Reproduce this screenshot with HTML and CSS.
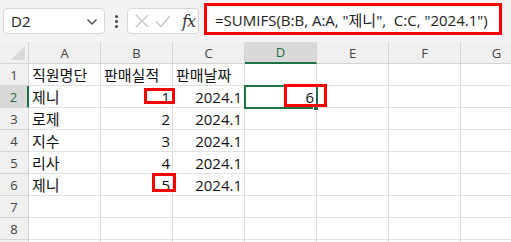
FILE: index.html
```html
<!DOCTYPE html>
<html lang="ko">
<head>
<meta charset="utf-8">
<link rel="stylesheet" href="styles.css">
</head>
<body>
<div class="app">
  <div class="toolbar">
    <div class="namebox">
      <span class="ref">D2</span>
      <svg class="chev" width="12" height="8" viewBox="0 0 12 8"><path d="M1.5 1.5 L6 6 L10.5 1.5" fill="none" stroke="#444" stroke-width="1.3"/></svg>
    </div>
    <div class="kebab"><i></i><i></i><i></i></div>
    <div class="fxbox">
      <svg width="16" height="16" viewBox="0 0 16 16"><path d="M2 2 L14 14 M14 2 L2 14" stroke="#c4c4c4" stroke-width="1.3" fill="none"/></svg>
      <svg width="18" height="16" viewBox="0 0 18 16"><path d="M2 8.5 L7 13.5 L16 3" stroke="#c4c4c4" stroke-width="1.3" fill="none"/></svg>
      <span class="fx">fx</span>
    </div>
    <div class="formula">=SUMIFS(B:B, A:A, "제니",&nbsp; C:C, "2024.1")</div>
  </div>
  <div class="sheet">
    <div class="corner"><span class="tri"></span></div>
    <div class="colh">A</div>
    <div class="colh">B</div>
    <div class="colh">C</div>
    <div class="colh sel">D</div>
    <div class="colh">E</div>
    <div class="colh">F</div>
    <div class="colh">G</div>

    <div class="rowh">1</div>
    <div class="cell">직원명단</div>
    <div class="cell">판매실적</div>
    <div class="cell">판매날짜</div>
    <div class="cell"></div><div class="cell"></div><div class="cell"></div><div class="cell"></div>

    <div class="rowh sel">2</div>
    <div class="cell">제니</div>
    <div class="cell num">1<span class="mark mark-b2"></span></div>
    <div class="cell num">2024.1</div>
    <div class="cell num active">6<span class="handle"></span><span class="mark mark-d2"></span></div>
    <div class="cell"></div><div class="cell"></div><div class="cell"></div>

    <div class="rowh">3</div>
    <div class="cell">로제</div>
    <div class="cell num">2</div>
    <div class="cell num">2024.1</div>
    <div class="cell"></div><div class="cell"></div><div class="cell"></div><div class="cell"></div>

    <div class="rowh">4</div>
    <div class="cell">지수</div>
    <div class="cell num">3</div>
    <div class="cell num">2024.1</div>
    <div class="cell"></div><div class="cell"></div><div class="cell"></div><div class="cell"></div>

    <div class="rowh">5</div>
    <div class="cell">리사</div>
    <div class="cell num">4</div>
    <div class="cell num">2024.1</div>
    <div class="cell"></div><div class="cell"></div><div class="cell"></div><div class="cell"></div>

    <div class="rowh">6</div>
    <div class="cell">제니</div>
    <div class="cell num">5<span class="mark mark-b6"></span></div>
    <div class="cell num">2024.1</div>
    <div class="cell"></div><div class="cell"></div><div class="cell"></div><div class="cell"></div>

    <div class="rowh">7</div>
    <div class="cell"></div><div class="cell"></div><div class="cell"></div><div class="cell"></div><div class="cell"></div><div class="cell"></div><div class="cell"></div>

    <div class="rowh">8</div>
    <div class="cell"></div><div class="cell"></div><div class="cell"></div><div class="cell"></div><div class="cell"></div><div class="cell"></div><div class="cell"></div>

    <div class="rowh"></div>
    <div class="cell"></div><div class="cell"></div><div class="cell"></div><div class="cell"></div><div class="cell"></div><div class="cell"></div><div class="cell"></div>
  </div>
</div>
</body>
</html>
```
FILE: styles.css
```css
* { box-sizing: border-box; }
html, body { margin: 0; padding: 0; background: #fff; }
body { width: 511px; height: 242px; overflow: hidden; font-family: "Open Sans", "Noto Sans CJK KR", sans-serif; }
.app { width: 511px; }

.toolbar {
  height: 42px;
  background: #f3f3f3;
  display: flex;
  align-items: flex-start;
  padding: 8px 0 0 3px;
  position: relative;
}
.namebox {
  width: 102px; height: 26px;
  background: #fff;
  border: 1px solid #d6d6d6;
  border-radius: 4px;
  display: flex; align-items: center; justify-content: space-between;
  padding: 0 6px 0 7px;
}
.ref { font-size: 15px; color: #222; }
.chev { margin-top: 1px; }
.kebab {
  width: 22px; height: 26px;
  display: flex; flex-direction: column; align-items: center; justify-content: center; gap: 2px;
}
.kebab i { display: block; width: 3px; height: 3px; background: #444; border-radius: 50%; }
.fxbox {
  width: 72px; height: 26px;
  background: #fff;
  border: 1px solid #d6d6d6;
  border-radius: 4px;
  display: flex; align-items: center;
  padding: 0 0 0 6px; gap: 4px;
}
.fx { font-family: "DejaVu Serif", "Liberation Serif", serif; font-style: italic; font-size: 16px; color: #333; margin-left: 6px; letter-spacing: -1px; }
.formula {
  position: absolute; left: 204px; top: 3px;
  width: 298px; height: 32px;
  background: #fff;
  border: 3px solid #f00;
  font-family: "Open Sans", "Noto Sans CJK KR", sans-serif;
  font-size: 15px; color: #222;
  padding: 3px 0 0 8px;
  white-space: nowrap;
}

.sheet {
  display: grid;
  grid-template-columns: 29px repeat(7, 72px);
  grid-template-rows: 22px repeat(8, 22px) 10px;
  font-family: "Open Sans", "Noto Sans CJK KR", sans-serif;
}
.corner { background: #f0f0f0; border-right: 1px solid #d4d4d4; border-bottom: 1px solid #d4d4d4; position: relative; }
.tri { position: absolute; right: 3px; bottom: 3px; width: 0; height: 0; border-left: 14px solid transparent; border-bottom: 14px solid #dadada; }
.colh {
  background: #f0f0f0;
  border-right: 1px solid #d4d4d4; border-bottom: 1px solid #d4d4d4;
  font-size: 13px; color: #444;
  display: flex; align-items: center; justify-content: center;
}
.colh.sel { background: #d9d9d9; color: #1e6e42; border-bottom: 2px solid #217346; }
.rowh {
  background: #f0f0f0;
  border-right: 1px solid #d4d4d4; border-bottom: 1px solid #d4d4d4;
  font-size: 13px; color: #444;
  display: flex; align-items: center; justify-content: center;
}
.rowh.sel { background: #d9d9d9; color: #1e6e42; border-right: 2px solid #217346; }
.cell {
  border-right: 1px solid #e1e1e1; border-bottom: 1px solid #e1e1e1;
  font-size: 15px; color: #111;
  display: flex; align-items: center;
  padding: 0 3px;
  position: relative;
  white-space: nowrap;
}
.cell.num { justify-content: flex-end; padding-right: 2px; }
.cell.active { outline: 2px solid #217346; outline-offset: -1px; z-index: 2; }
.handle { position: absolute; right: -3px; bottom: -4px; width: 6px; height: 6px; background: #217346; border: 1px solid #fff; }
.mark { position: absolute; border: 3px solid #f00; pointer-events: none; z-index: 3; }
.mark-b2 { left: 43px; top: 2px; width: 31px; height: 16px; }
.mark-d2 { left: 39px; top: -2px; width: 43px; height: 23px; }
.mark-b6 { left: 51px; top: -1px; width: 24px; height: 19px; }
```
